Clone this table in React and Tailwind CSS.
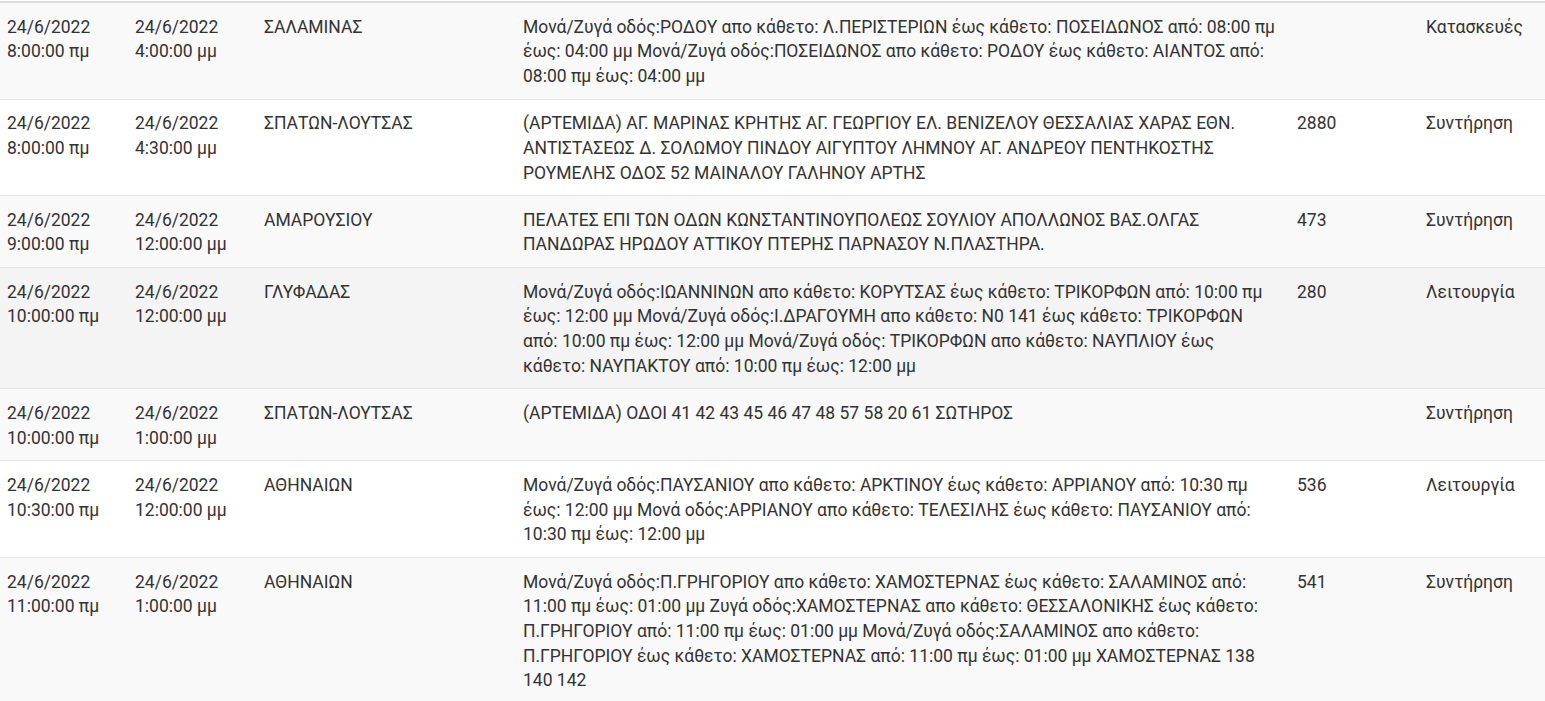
import React from "react";

const rows = [
  {
    s: ["24/6/2022", "8:00:00 πμ"],
    e: ["24/6/2022", "4:00:00 μμ"],
    area: "ΣΑΛΑΜΙΝΑΣ",
    desc: "Μονά/Ζυγά οδός:ΡΟΔΟΥ απο κάθετο: Λ.ΠΕΡΙΣΤΕΡΙΩΝ έως κάθετο: ΠΟΣΕΙΔΩΝΟΣ από: 08:00 πμ έως: 04:00 μμ Μονά/Ζυγά οδός:ΠΟΣΕΙΔΩΝΟΣ απο κάθετο: ΡΟΔΟΥ έως κάθετο: ΑΙΑΝΤΟΣ από: 08:00 πμ έως: 04:00 μμ",
    n: "",
    type: "Κατασκευές",
    bg: "bg-[#f9f9f9]",
  },
  {
    s: ["24/6/2022", "8:00:00 πμ"],
    e: ["24/6/2022", "4:30:00 μμ"],
    area: "ΣΠΑΤΩΝ-ΛΟΥΤΣΑΣ",
    desc: "(ΑΡΤΕΜΙΔΑ) ΑΓ. ΜΑΡΙΝΑΣ ΚΡΗΤΗΣ ΑΓ. ΓΕΩΡΓΙΟΥ ΕΛ. ΒΕΝΙΖΕΛΟΥ ΘΕΣΣΑΛΙΑΣ ΧΑΡΑΣ ΕΘΝ. ΑΝΤΙΣΤΑΣΕΩΣ Δ. ΣΟΛΩΜΟΥ ΠΙΝΔΟΥ ΑΙΓΥΠΤΟΥ ΛΗΜΝΟΥ ΑΓ. ΑΝΔΡΕΟΥ ΠΕΝΤΗΚΟΣΤΗΣ ΡΟΥΜΕΛΗΣ ΟΔΟΣ 52 ΜΑΙΝΑΛΟΥ ΓΑΛΗΝΟΥ ΑΡΤΗΣ",
    n: "2880",
    type: "Συντήρηση",
    bg: "bg-white",
  },
  {
    s: ["24/6/2022", "9:00:00 πμ"],
    e: ["24/6/2022", "12:00:00 μμ"],
    area: "ΑΜΑΡΟΥΣΙΟΥ",
    desc: "ΠΕΛΑΤΕΣ ΕΠΙ ΤΩΝ ΟΔΩΝ ΚΩΝΣΤΑΝΤΙΝΟΥΠΟΛΕΩΣ ΣΟΥΛΙΟΥ ΑΠΟΛΛΩΝΟΣ ΒΑΣ.ΟΛΓΑΣ ΠΑΝΔΩΡΑΣ ΗΡΩΔΟΥ ΑΤΤΙΚΟΥ ΠΤΕΡΗΣ ΠΑΡΝΑΣΟΥ Ν.ΠΛΑΣΤΗΡΑ.",
    n: "473",
    type: "Συντήρηση",
    bg: "bg-[#f9f9f9]",
  },
  {
    s: ["24/6/2022", "10:00:00 πμ"],
    e: ["24/6/2022", "12:00:00 μμ"],
    area: "ΓΛΥΦΑΔΑΣ",
    desc: "Μονά/Ζυγά οδός:ΙΩΑΝΝΙΝΩΝ απο κάθετο: ΚΟΡΥΤΣΑΣ έως κάθετο: ΤΡΙΚΟΡΦΩΝ από: 10:00 πμ έως: 12:00 μμ Μονά/Ζυγά οδός:Ι.ΔΡΑΓΟΥΜΗ απο κάθετο: Ν0 141 έως κάθετο: ΤΡΙΚΟΡΦΩΝ από: 10:00 πμ έως: 12:00 μμ Μονά/Ζυγά οδός: ΤΡΙΚΟΡΦΩΝ απο κάθετο: ΝΑΥΠΛΙΟΥ έως κάθετο: ΝΑΥΠΑΚΤΟΥ από: 10:00 πμ έως: 12:00 μμ",
    n: "280",
    type: "Λειτουργία",
    bg: "bg-[#f4f4f4]",
  },
  {
    s: ["24/6/2022", "10:00:00 πμ"],
    e: ["24/6/2022", "1:00:00 μμ"],
    area: "ΣΠΑΤΩΝ-ΛΟΥΤΣΑΣ",
    desc: "(ΑΡΤΕΜΙΔΑ) ΟΔΟΙ 41 42 43 45 46 47 48 57 58 20 61 ΣΩΤΗΡΟΣ",
    n: "",
    type: "Συντήρηση",
    bg: "bg-[#f9f9f9]",
  },
  {
    s: ["24/6/2022", "10:30:00 πμ"],
    e: ["24/6/2022", "12:00:00 μμ"],
    area: "ΑΘΗΝΑΙΩΝ",
    desc: "Μονά/Ζυγά οδός:ΠΑΥΣΑΝΙΟΥ απο κάθετο: ΑΡΚΤΙΝΟΥ έως κάθετο: ΑΡΡΙΑΝΟΥ από: 10:30 πμ έως: 12:00 μμ Μονά οδός:ΑΡΡΙΑΝΟΥ απο κάθετο: ΤΕΛΕΣΙΛΗΣ έως κάθετο: ΠΑΥΣΑΝΙΟΥ από: 10:30 πμ έως: 12:00 μμ",
    n: "536",
    type: "Λειτουργία",
    bg: "bg-white",
  },
  {
    s: ["24/6/2022", "11:00:00 πμ"],
    e: ["24/6/2022", "1:00:00 μμ"],
    area: "ΑΘΗΝΑΙΩΝ",
    desc: "Μονά/Ζυγά οδός:Π.ΓΡΗΓΟΡΙΟΥ απο κάθετο: ΧΑΜΟΣΤΕΡΝΑΣ έως κάθετο: ΣΑΛΑΜΙΝΟΣ από: 11:00 πμ έως: 01:00 μμ Ζυγά οδός:ΧΑΜΟΣΤΕΡΝΑΣ απο κάθετο: ΘΕΣΣΑΛΟΝΙΚΗΣ έως κάθετο: Π.ΓΡΗΓΟΡΙΟΥ από: 11:00 πμ έως: 01:00 μμ Μονά/Ζυγά οδός:ΣΑΛΑΜΙΝΟΣ απο κάθετο: Π.ΓΡΗΓΟΡΙΟΥ έως κάθετο: ΧΑΜΟΣΤΕΡΝΑΣ από: 11:00 πμ έως: 01:00 μμ ΧΑΜΟΣΤΕΡΝΑΣ 138 140 142",
    n: "541",
    type: "Συντήρηση",
    bg: "bg-[#f9f9f9]",
  },
];

const td = "align-top px-[7px] pt-[11.6px] pb-[10px] border-t border-[#e6e6e6]";
const tdDesc = "align-top pl-[7px] pr-[12px] pt-[11.6px] pb-[10px] border-t border-[#e6e6e6]";

export default function App() {
  return (
    <div
      className="w-[1545px] bg-white pt-[1px] text-[#333333] text-[17.5px] leading-[24.67px]"
      style={{ fontFamily: "Roboto, 'Noto Sans', sans-serif" }}
    >
      <table className="w-full table-fixed border-collapse border-t-2 border-[#dddddd]">
        <colgroup>
          <col className="w-[128px]" />
          <col className="w-[129px]" />
          <col className="w-[259px]" />
          <col className="w-[774px]" />
          <col className="w-[129px]" />
          <col />
        </colgroup>
        <tbody>
          {rows.map((r, i) => (
            <tr key={i} className={r.bg}>
              <td className={td}>
                {r.s[0]}
                <br />
                {r.s[1]}
              </td>
              <td className={td}>
                {r.e[0]}
                <br />
                {r.e[1]}
              </td>
              <td className={td}>{r.area}</td>
              <td className={tdDesc}>{r.desc}</td>
              <td className={td}>{r.n}</td>
              <td className={td}>{r.type}</td>
            </tr>
          ))}
        </tbody>
      </table>
    </div>
  );
}
